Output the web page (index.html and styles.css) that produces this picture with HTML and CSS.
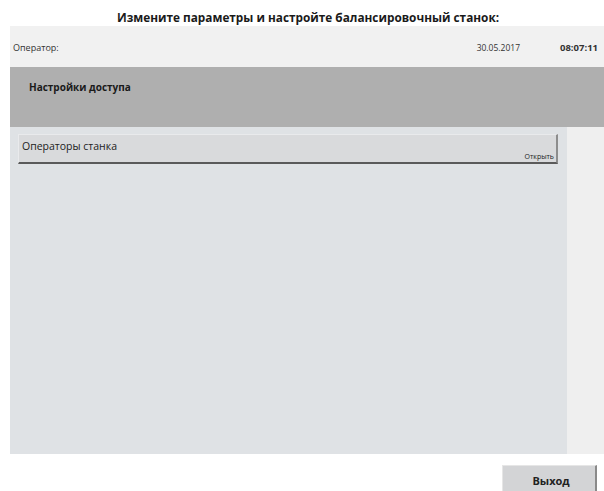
FILE: index.html
```html
<!DOCTYPE html>
<html lang="ru">
<head>
<meta charset="utf-8">
<title>Настройки доступа</title>
<link rel="stylesheet" href="styles.css">
</head>
<body>
<div class="screen">
  <h1 class="title">Измените параметры и настройте балансировочный станок:</h1>
  <div class="app">
    <div class="topbar">
      <span class="operator">Оператор:</span>
      <span class="date">30.05.2017</span>
      <span class="time">08:07:11</span>
    </div>
    <div class="section-head">Настройки доступа</div>
    <div class="content">
      <div class="list">
        <button class="row" type="button">
          <span class="row-label">Операторы станка</span>
          <span class="row-action">Открыть</span>
        </button>
      </div>
      <div class="aside"></div>
    </div>
    <div class="footer">
      <button class="exit" type="button">Выход</button>
    </div>
  </div>
</div>
</body>
</html>
```

FILE: styles.css
```css
html, body {
  margin: 0;
  padding: 0;
  background: #ffffff;
}

body {
  font-family: "Open Sans", "Noto Sans", sans-serif;
  color: #1a1a1a;
  width: 604px;
  height: 491px;
  overflow: hidden;
}

.title {
  margin: 0;
  height: 16px;
  padding-top: 10px;
  line-height: 14px;
  font-size: 11.8px;
  font-weight: 700;
  text-align: center;
  padding-left: 12px;
  white-space: nowrap;
}

.app {
  margin-left: 10px;
  display: flex;
  flex-direction: column;
}

.topbar {
  height: 41px;
  background: #f1f1f1;
  display: flex;
  align-items: center;
  font-size: 9px;
  padding-left: 3px;
  padding-top: 1px;
  box-sizing: border-box;
  color: #333;
  white-space: nowrap;
}

.operator {
  flex: 1;
}

.date {
  font-size: 8.5px;
  margin-right: 40px;
}

.time {
  font-weight: 700;
  width: 44px;
  font-size: 9.5px;
}

.section-head {
  height: 60px;
  background: #afafaf;
  box-sizing: border-box;
  padding: 13px 0 0 19px;
  font-size: 10px;
  font-weight: 700;
}

.content {
  height: 327px;
  display: flex;
}

.list {
  width: 557px;
  background: #dfe2e5;
  box-sizing: border-box;
  padding: 7px 9px 0 8px;
}

.aside {
  flex: 1;
  background: #efefef;
}

.row {
  display: flex;
  justify-content: space-between;
  align-items: flex-start;
  width: 100%;
  height: 30px;
  box-sizing: border-box;
  margin: 0;
  padding: 4px 2px 0 3px;
  background: #d9dadc;
  border: 1px solid #e9eaec;
  border-right: 2px solid #8d8d8d;
  border-bottom: 2px solid #5a5a5a;
  font-family: inherit;
  color: #222;
  text-align: left;
}

.row-label {
  font-size: 10.5px;
}

.row-action {
  font-size: 7px;
  align-self: flex-end;
  margin-bottom: 1px;
}

.footer {
  display: flex;
  justify-content: flex-end;
  padding-top: 11px;
  padding-right: 7px;
}

.exit {
  width: 95px;
  height: 30px;
  margin: 0;
  padding: 0 0 0 4px;
  background: #d3d4d6;
  border: 1px solid #e6e6e6;
  border-right: 2px solid #8a8a8a;
  font-family: inherit;
  font-size: 11px;
  font-weight: 700;
  color: #222;
}
```
